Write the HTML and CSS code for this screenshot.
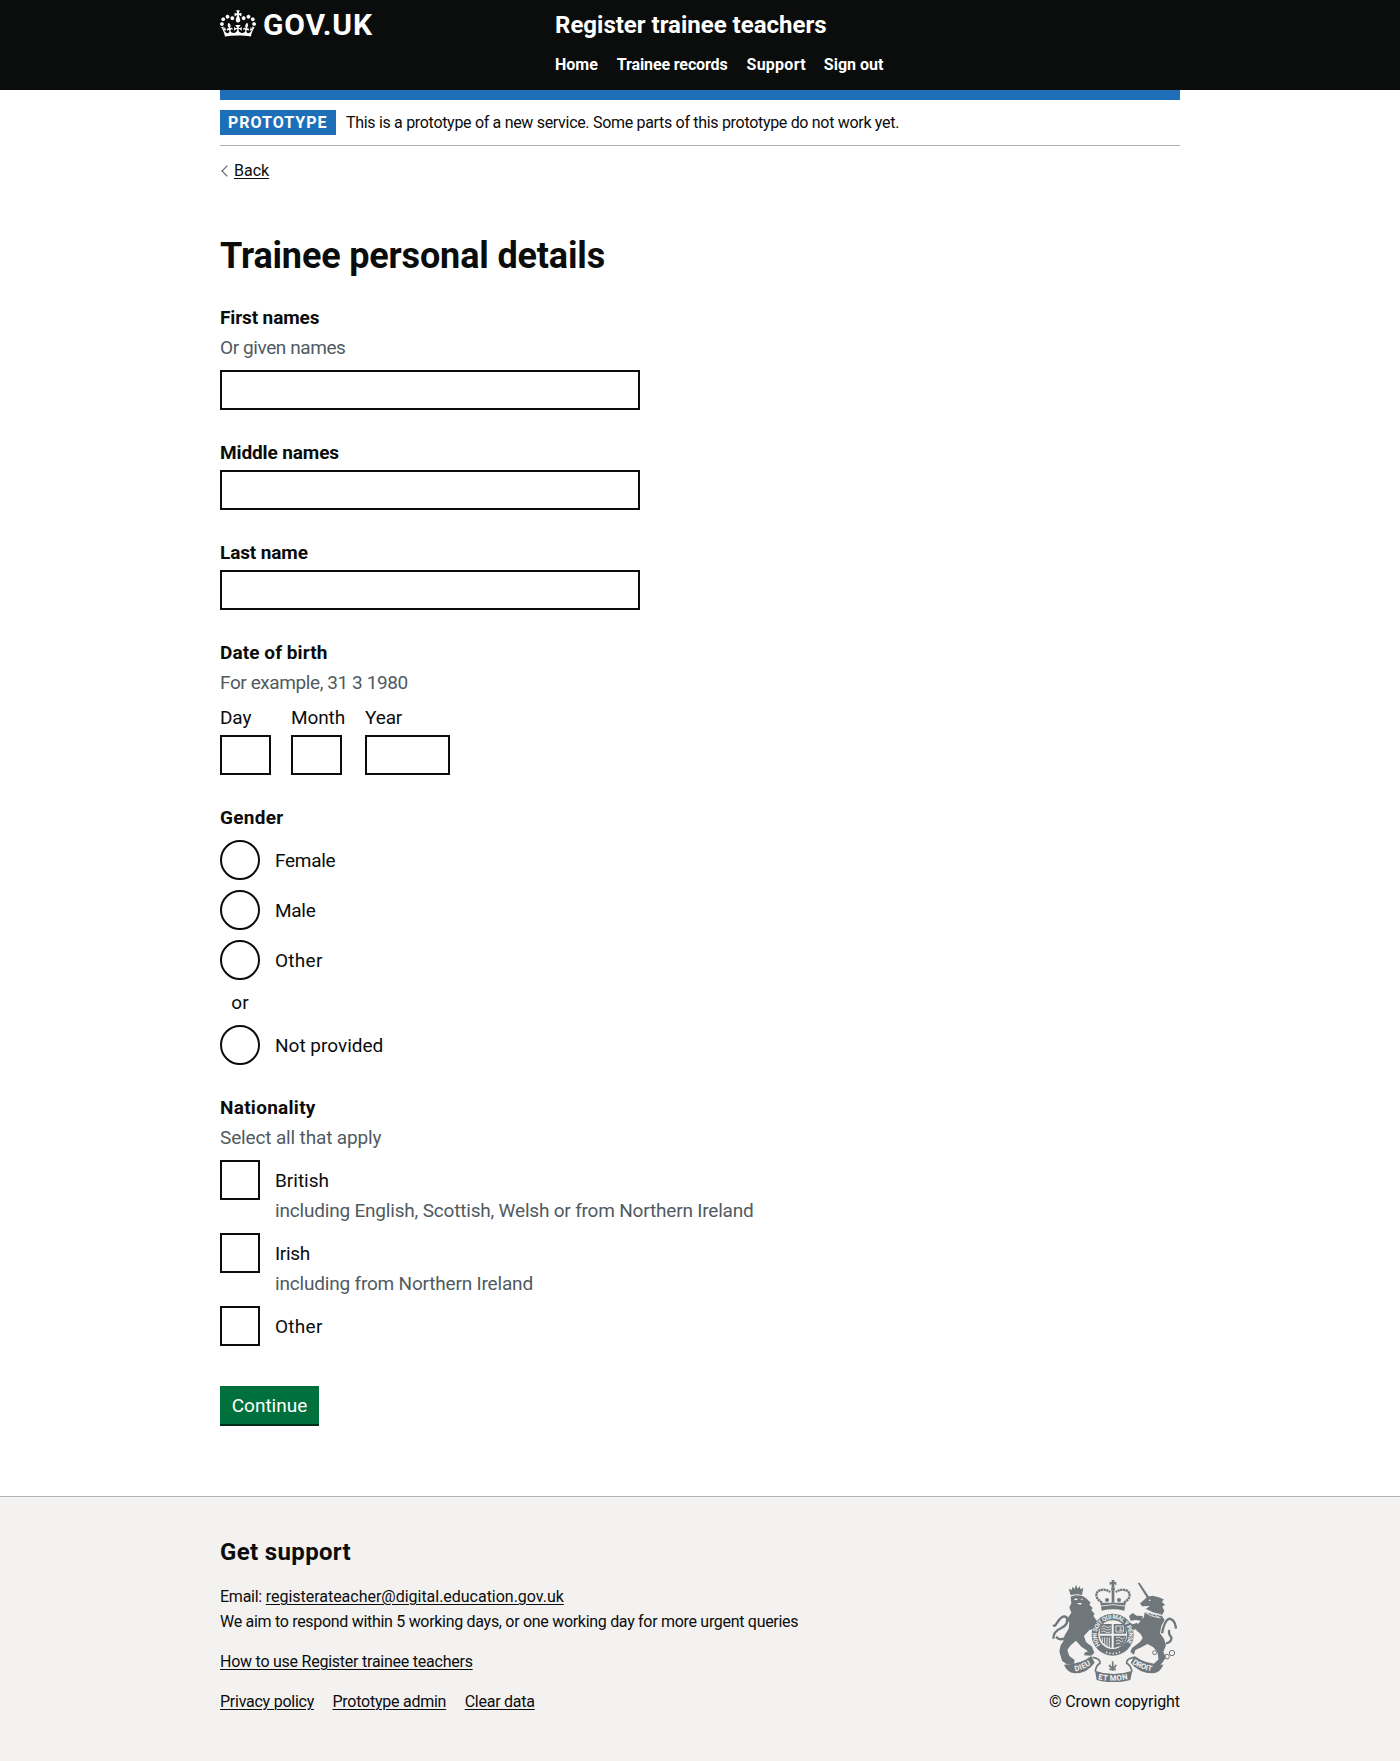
FILE: index.html
```html
<!DOCTYPE html>
<html lang="en">
<head>
<meta charset="utf-8">
<title>Trainee personal details</title>
<link rel="stylesheet" href="styles.css">
</head>
<body>
<header class="header">
  <div class="container header-row">
    <a class="logo" href="#">
      <svg class="crown" viewBox="0 0 132 97" width="36" height="27" fill="currentColor" aria-hidden="true"><path d="M25 30.2c3.5 1.5 7.7-.2 9.1-3.7 1.5-3.6-.2-7.8-3.9-9.2-3.6-1.4-7.6.3-9.1 3.9-1.4 3.5.3 7.5 3.9 9zM9 39.5c3.6 1.5 7.8-.2 9.2-3.7 1.5-3.6-.2-7.8-3.9-9.1-3.6-1.5-7.6.2-9.1 3.8-1.4 3.5.3 7.5 3.8 9zM4.4 57.2c3.5 1.5 7.7-.2 9.1-3.8 1.5-3.6-.2-7.7-3.9-9.1-3.5-1.5-7.6.3-9.1 3.8-1.4 3.5.3 7.6 3.9 9.1zm38.3-21.4c3.5 1.5 7.7-.2 9.1-3.8 1.5-3.6-.2-7.7-3.9-9.1-3.6-1.5-7.6.3-9.1 3.8-1.3 3.6.4 7.7 3.9 9.1zm64.4-5.6c-3.6 1.5-7.8-.2-9.1-3.7-1.5-3.6.2-7.8 3.8-9.2 3.6-1.4 7.7.3 9.2 3.9 1.3 3.5-.4 7.5-3.9 9zm15.9 9.3c-3.6 1.5-7.7-.2-9.1-3.7-1.5-3.6.2-7.8 3.7-9.1 3.6-1.5 7.7.2 9.2 3.8 1.5 3.5-.3 7.5-3.8 9zm4.7 17.7c-3.6 1.5-7.8-.2-9.2-3.8-1.5-3.6.2-7.7 3.9-9.1 3.6-1.5 7.7.3 9.2 3.8 1.3 3.5-.4 7.6-3.9 9.1zM89.3 35.8c-3.6 1.5-7.8-.2-9.2-3.8-1.4-3.6.2-7.7 3.9-9.1 3.6-1.5 7.7.3 9.2 3.8 1.4 3.6-.3 7.7-3.9 9.1zM69.7 17.7l8.9 4.7V9.3l-8.9 2.8c-.2-.3-.5-.6-.9-.9L72.4 0H59.6l3.5 11.2c-.3.3-.6.5-.9.9l-8.8-2.8v13.1l8.8-4.7c.3.3.6.7.9.9l-5 15.4v.1c-.2.8-.4 1.6-.4 2.4 0 4.1 3.1 7.5 7 8.1h.2c.3 0 .7.1 1 .1.4 0 .7 0 1-.1h.2c4-.6 7.1-4.1 7.1-8.1 0-.8-.1-1.7-.4-2.4V34l-5.1-15.4c.4-.2.7-.6 1-.9zM66 92.8c16.9 0 32.8 1.1 47.1 3.2 4-16.9 8.9-26.7 14-33.5l-9.6-3.4c1 4.9 1.1 7.2 0 10.2-1.5-1.4-3-4.3-4.2-8.7L108.6 76c2.8-2 5-3.2 7.5-3.3-4.4 9.4-10 11.9-13.6 11.2-4.3-.8-6.3-4.6-5.6-7.9 1-4.7 5.7-5.9 8-.5 4.3-8.7-3-11.4-7.6-8.8 7.1-7.2 7.9-13.5 2.1-21.1-8 6.1-8.1 12.3-4.5 20.8-4.7-5.4-12.1-2.5-9.5 6.2 3.4-5.2 7.9-2 7.2 3.1-.6 4.3-6.4 7.8-13.5 7.2-10.3-.9-10.9-8-11.2-13.8 2.5-.5 7.1 1.8 11 7.3L80.2 60c-4.1 4.4-8 5.3-12.3 5.4 1.4-4.4 8-11.6 8-11.6H55.5s6.4 7.2 7.9 11.6c-4.2-.1-8-1-12.3-5.4l1.4 16.4c3.9-5.5 8.5-7.7 10.9-7.3-.3 5.8-.9 12.8-11.1 13.8-7.2.6-12.9-2.9-13.5-7.2-.7-5 3.8-8.3 7.1-3.1 2.7-8.7-4.6-11.6-9.4-6.2 3.7-8.5 3.6-14.7-4.6-20.8-5.8 7.6-5 13.9 2.2 21.1-4.7-2.6-11.9.1-7.7 8.8 2.3-5.5 7.1-4.2 8.1.5.7 3.3-1.3 7.1-5.7 7.9-3.5.7-9-1.8-13.5-11.2 2.5.1 4.7 1.3 7.5 3.3l-4.7-15.4c-1.2 4.4-2.7 7.2-4.3 8.7-1.1-3-.9-5.3 0-10.2l-9.5 3.4c5 6.9 9.9 16.7 14 33.5 14.8-2.1 30.8-3.2 47.7-3.2z"/></svg>
      <span class="logo-text">GOV.UK</span>
    </a>
    <div class="header-content">
      <a class="service-name" href="#">Register trainee teachers</a>
      <nav class="nav">
        <a href="#">Home</a>
        <a class="nav-records" href="#">Trainee records</a>
        <a class="nav-support" href="#">Support</a>
        <a href="#">Sign out</a>
      </nav>
    </div>
  </div>
</header>

<div class="container">
  <div class="phase-banner">
    <strong class="tag">PROTOTYPE</strong>
    <span class="phase-text">This is a prototype of a new service. Some parts of this prototype do not work yet.</span>
  </div>
  <a class="back-link" href="#"><span class="chevron"></span><span class="link">Back</span></a>

  <main class="main">
    <h1 class="title">Trainee personal details</h1>
    <form>
      <div class="group">
        <label class="label bold" for="first">First names</label>
        <span class="hint narrow">Or given names</span>
        <input class="input" id="first" type="text">
      </div>
      <div class="group">
        <label class="label bold" for="middle">Middle names</label>
        <input class="input" id="middle" type="text">
      </div>
      <div class="group">
        <label class="label bold" for="last">Last name</label>
        <input class="input" id="last" type="text">
      </div>
      <div class="group" role="group">
        <span class="label bold dob">Date of birth</span>
        <span class="hint narrow">For example, 31 3 1980</span>
        <div class="date">
          <div class="date-item"><label class="label" for="day">Day</label><input class="input input-2" id="day"></div>
          <div class="date-item"><label class="label" for="month">Month</label><input class="input input-2" id="month"></div>
          <div class="date-item"><label class="label" for="year">Year</label><input class="input input-4" id="year"></div>
        </div>
      </div>
      <div class="group" role="radiogroup">
        <span class="label bold wide legend">Gender</span>
        <div class="choices">
          <label class="choice"><input class="box radio" type="radio" name="g"><span class="choice-text snug">Female</span></label>
          <label class="choice"><input class="box radio" type="radio" name="g"><span class="choice-text snug">Male</span></label>
          <label class="choice"><input class="box radio" type="radio" name="g"><span class="choice-text wide">Other</span></label>
          <div class="divider">or</div>
          <label class="choice"><input class="box radio" type="radio" name="g"><span class="choice-text">Not provided</span></label>
        </div>
      </div>
      <div class="group" role="group">
        <span class="label bold wide">Nationality</span>
        <span class="hint">Select all that apply</span>
        <div class="choices">
          <div>
            <label class="choice"><input class="box" type="checkbox"><span class="choice-text">British</span></label>
            <span class="choice-hint">including English, Scottish, Welsh or from Northern Ireland</span>
          </div>
          <div>
            <label class="choice"><input class="box" type="checkbox"><span class="choice-text snug">Irish</span></label>
            <span class="choice-hint">including from Northern Ireland</span>
          </div>
          <label class="choice"><input class="box" type="checkbox"><span class="choice-text wide">Other</span></label>
        </div>
      </div>
      <button class="button" type="button">Continue</button>
    </form>
  </main>
</div>

<footer class="footer">
  <div class="container footer-row">
    <div class="footer-main">
      <h2 class="footer-title">Get support</h2>
      <div>Email: <a class="link email" href="#">registerateacher@digital.education.gov.uk</a></div>
      <div class="gap respond">We aim to respond within 5 working days, or one working day for more urgent queries</div>
      <div class="gap"><a class="link guide" href="#">How to use Register trainee teachers</a></div>
      <div class="footer-links">
        <a class="link" href="#">Privacy policy</a>
        <a class="link" href="#">Prototype admin</a>
        <a class="link" href="#">Clear data</a>
      </div>
    </div>
    <div class="copyright">
      <svg class="crest" viewBox="36 30 375 306" width="125" height="102" aria-hidden="true">
        <g class="ink">
          <!-- lion -->
          <path d="M92 76l-6-20 9 4 3-10 6 7 4-13 5 12 7-8 1 10 9-4-4 21q-16-5-34 1z"/>
          <path d="M92 80Q108 73 128 78L140 86 152 98 148 104 158 114 154 120 164 132 160 138 170 152 176 200 164 176 148 180 132 198 138 216 156 230 163 248 154 257 132 256 134 248 144 244 124 230 108 212 92 226 82 240 88 258 104 270 102 281 80 283 66 272 58 244 62 226 70 214 74 196 86 176 88 158 82 146 94 128 88 112 94 100Z"/>
          <!-- unicorn -->
          <path d="M293 39l6-1 28 42-6 4z"/>
          <path d="M300 100L312 90 322 80 338 77 356 82 371 88 366 96 375 104 367 110 373 122 366 136 340 128 316 118 330 108 306 109Z"/>
          <path d="M314 126L366 138 374 150 364 168 360 190 372 206 378 226 370 246 378 262 366 280 350 292 340 283 356 268 352 246 340 232 322 222 304 232 286 240 282 254 271 246 276 234 300 216 308 204 302 192 290 182 284 168 296 160 304 150 312 140Z"/>
          <path d="M267 138L278 129 290 137 308 138 306 153 288 150 272 152ZM292 158L278 163 268 156 262 164 272 180 292 178Z"/>
          <!-- royal crown -->
          <path d="M181 98h76l-4 24q-34-8-68 0z"/>
          <path d="M214 30h10l-2 7 7-2v10l-7-2 2 8h-10l2-8-7 2v-10l7 2z"/>
          <circle cx="219" cy="57" r="6"/>
          <path d="M215 62h8v36h-8z"/>
          <circle cx="201" cy="90" r="6"/><circle cx="237" cy="90" r="6"/>
        </g>
        <g class="line">
          <path class="tail" d="M82 200Q62 216 48 200M40 206Q40 184 64 174 88 162 80 142 66 132 50 160 44 172 40 164"/>
          <path class="tail" d="M366 190Q374 150 388 146 406 150 408 176M388 180Q384 192 394 202 396 216 378 220"/>
          <path class="dots" d="M186 98Q162 82 172 66 188 52 211 66M252 98Q276 82 266 66 250 52 227 66"/>
          <circle class="thin" cx="344" cy="248" r="6"/><circle class="thin" cx="362" cy="262" r="6"/><circle class="thin" cx="381" cy="260" r="7"/><circle class="thin" cx="396" cy="249" r="8"/>
        </g>
        <g class="paper">
          <path d="M102 87l9-2 2 4-9 2zM120 87l9-1-2 4zM110 99l16 0-5 6z"/>
          <circle cx="329" cy="91" r="2.5"/>
        </g>
        <path class="paper-line" d="M183 108q36-8 72 0M314 116q24 16 50 18M312 126q24 16 50 18M316 122l10 8 4-6 8 12 6-6 8 12 6-6"/>
        <!-- garter and shield -->
        <circle class="disc" cx="218" cy="194" r="63"/>
        <circle class="paper" cx="218" cy="194" r="43"/>
        <g class="ink">
          <path d="M184 162h31v29h-36q0-16 5-29zM221 197h38q-2 20-14 30l-24 7zM179 197h36v37q-32-10-36-37zM221 162h32q6 14 5 29h-37z"/>
        </g>
        <g class="paper-line">
          <path d="M185 170q8-6 13 0t15-1M184 178q8-6 13 0t15-1M184 186q8-6 13 0t15-1M228 204q8-6 13 0t13-1M228 213q8-6 12 0t10-1M228 222q8-6 13 0M228 168h22v18h-22zM240 171l5 11-8-2M187 202v14M194 202v22M201 202v26M208 202v30"/>
        </g>
        <defs>
          <path id="garterArc" d="M181 225A48 48 0 1 1 255 225"/>
          <path id="motto1" d="M106 304Q134 298 158 280"/>
          <path id="motto2" d="M174 328Q219 337 266 327"/>
          <path id="motto3" d="M276 280Q300 298 338 304"/>
        </defs>
        <text class="crest-text"><textPath href="#garterArc" textLength="208">HONI SOIT QUI MAL Y PENSE</textPath></text>
        <path class="paper-line dotted" d="M198 247q20 8 42-1"/>
        <!-- motto ribbons -->
        <g class="ink">
          <path d="M72 284Q120 284 154 258L164 278Q142 310 104 310 80 306 72 284Z"/>
          <path d="M370 284Q318 284 284 258L272 278Q296 310 340 310 362 306 370 284Z"/>
          <path d="M165 302Q219 322 277 302L271 330Q219 344 170 330Z"/>
        </g>
        <g class="line"><path d="M158 262Q182 266 180 280 168 286 166 304M282 262Q258 266 260 280 272 286 276 304M218 274v28M208 284q4 12 10 6 6 6 10-6M208 298h20"/></g>
        <text class="crest-text motto"><textPath href="#motto1" textLength="52">DIEU</textPath></text>
        <text class="crest-text motto"><textPath href="#motto2" textLength="90">ET MON</textPath></text>
        <text class="crest-text motto"><textPath href="#motto3" textLength="64">DROIT</textPath></text>
      </svg>
      <a class="copy-link" href="#">© Crown copyright</a>
    </div>
  </div>
</footer>
</body>
</html>
```

FILE: styles.css
```css
* { box-sizing: border-box; }
body {
  margin: 0;
  background: #fff;
  color: #0b0c0c;
  font: 19px/25px Roboto, "Liberation Sans", sans-serif;
}
a { color: inherit; text-decoration: none; }
.container { width: 960px; margin: 0 auto; }
.link { text-decoration: underline; text-decoration-thickness: 1px; text-underline-offset: 2px; }

.header { background: #0b0c0c; color: #fff; height: 90px; }
.header-row { display: flex; height: 100px; border-bottom: 10px solid #1d70b8; }
.logo { display: flex; width: 335px; padding-top: 10px; }
.logo-text { margin-left: 7px; font-size: 30px; line-height: 30px; font-weight: 700; letter-spacing: .85px; }
.header-content { display: flex; flex-direction: column; padding-top: 10px; }
.service-name { font-size: 24px; line-height: 30px; font-weight: 700; }
.nav { display: flex; gap: 19px; margin-top: 15px; font-size: 16px; line-height: 20px; font-weight: 700; }
.nav-records { letter-spacing: -.13px; }
.nav-support { letter-spacing: .25px; margin-right: -1px; }

.phase-banner { display: flex; align-items: center; margin-top: 10px; height: 46px; border-bottom: 1px solid #b1b4b6; font-size: 16px; line-height: 20px; }
.tag { width: 116px; margin-right: 10px; padding: 3px 0 2px 8px; background: #1d70b8; color: #fff; letter-spacing: 1px; }
.phase-text { letter-spacing: -.31px; padding-top: 1px; }
.back-link { display: flex; align-items: center; width: max-content; margin-top: 15px; font-size: 16px; line-height: 20px; }
.chevron { width: 8px; height: 8px; margin: 0 3px 0 3px; border: solid #505a5f; border-width: 0 0 1px 1px; transform: rotate(45deg); }

.main { padding-top: 55px; }
.title { margin: 0 0 29px; font-size: 36px; line-height: 40px; font-weight: 700; letter-spacing: -.16px; }
.group { margin-bottom: 30px; }
.label { display: block; margin-bottom: 5px; letter-spacing: -.12px; }
.bold { font-weight: 700; }
.dob { letter-spacing: .08px; }
.legend { margin-bottom: 10px; }
.hint { display: block; margin-bottom: 10px; color: #505a5f; letter-spacing: -.15px; }
.narrow { letter-spacing: -.41px; }
.snug { letter-spacing: -.3px; }
.wide { letter-spacing: .28px; }
.input { display: block; width: 420px; height: 40px; margin: 0; border: 2px solid #0b0c0c; border-radius: 0; background: #fff; }
.date { display: flex; gap: 20px; }
.input-2 { width: 51px; }
.input-4 { width: 85px; }
.choices { display: flex; flex-direction: column; gap: 10px; }
.choice { display: flex; align-items: center; gap: 15px; height: 40px; }
.box { appearance: none; flex: none; width: 40px; height: 40px; margin: 0; border: 2px solid #0b0c0c; background: #fff; }
.radio { border-radius: 50%; }
.divider { width: 40px; text-align: center; }
.choice-hint { display: block; margin: -2px 0 0 55px; color: #505a5f; letter-spacing: -.19px; }
.button { display: block; width: 99px; height: 40px; margin: 40px 0 0; padding: 0; border: 0; border-bottom: 2px solid #002d18; background: #00703c; color: #fff; font: inherit; }

.footer { margin-top: 70px; height: 265px; border-top: 1px solid #b1b4b6; background: #f3f2f1; font-size: 16px; line-height: 25px; letter-spacing: -.25px; }
.footer-row { display: flex; justify-content: space-between; padding-top: 40px; }
.footer-title { margin: 0 0 17px; font-size: 24px; line-height: 30px; font-weight: 700; letter-spacing: .35px; }
.email { letter-spacing: -.02px; }
.respond { letter-spacing: -.3px; }
.guide { letter-spacing: -.24px; }
.gap { margin-bottom: 15px; }
.footer-links { display: flex; gap: 18.5px; }
.copyright { display: flex; flex-direction: column; align-items: center; padding-top: 43px; letter-spacing: -.08px; }
.crest { display: block; margin-bottom: 7px; }
.ink { fill: #6f777b; }
.line { fill: none; stroke: #6f777b; stroke-width: 5; }
.tail { stroke-width: 7; }
.thin { stroke-width: 3; }
.dots { stroke-width: 7; stroke-dasharray: 7 1.5; }
.paper { fill: #f3f2f1; }
.paper-line { fill: none; stroke: #f3f2f1; stroke-width: 2.5; }
.dotted { stroke-width: 5; stroke-dasharray: 4 6; }
.disc { fill: #6f777b; }
.crest-text { fill: #f3f2f1; font-size: 18px; font-weight: 700; letter-spacing: 0; }
.motto { font-size: 23px; }
```
